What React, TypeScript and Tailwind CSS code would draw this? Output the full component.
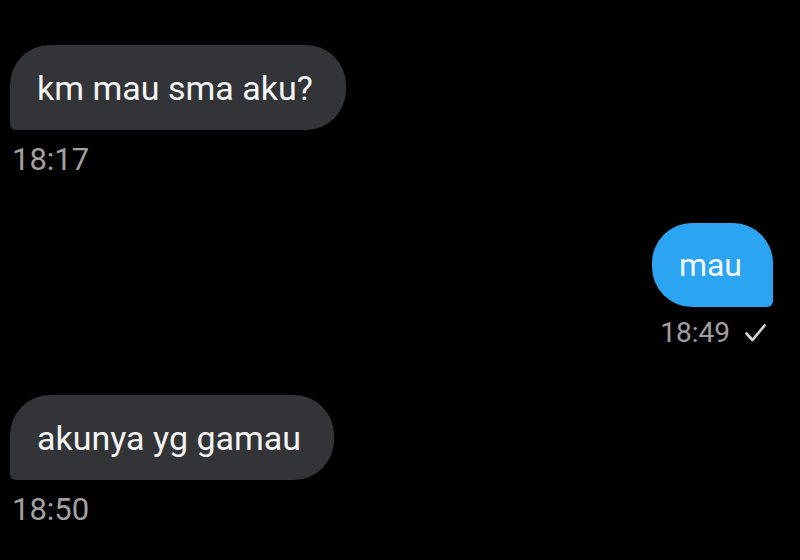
export default function App() {
  return (
    <div className="w-[800px] h-[560px] bg-black overflow-hidden font-['Roboto',sans-serif] flex flex-col pt-[45px]">
      <div className="ml-[10px] self-start h-[85px] flex items-center pl-[27px] pr-[33px] bg-[#323437] rounded-[40px] rounded-bl-[6px]">
        <span className="text-[34px] leading-none text-[#f4f4f4]">km mau sma aku?</span>
      </div>
      <div className="ml-[12px] mt-[14px] text-[31px] leading-none text-[#a0a0a0]">18:17</div>

      <div className="mt-[48px] mr-[27px] self-end h-[84px] flex items-center pl-[27px] pr-[31px] bg-[#2ba4f2] rounded-[40px] rounded-br-[6px]">
        <span className="text-[32px] leading-none text-[#f4f8fb]">mau</span>
      </div>
      <div className="mt-[12px] mr-[34px] self-end flex items-center gap-[15px] text-[28px] leading-none text-[#a0a0a0]">
        <span>18:49</span>
        <svg width="21" height="18" viewBox="0 0 21 18" fill="none">
          <path d="M1.5 9.5 L7.5 16 L19.5 1.5" stroke="#d4d4d4" strokeWidth="2.7" strokeLinecap="round" strokeLinejoin="round" />
        </svg>
      </div>

      <div className="mt-[48px] ml-[10px] self-start h-[85px] flex items-center pl-[27px] pr-[33px] bg-[#323437] rounded-[40px] rounded-bl-[6px]">
        <span className="text-[34px] leading-none text-[#f4f4f4]">akunya yg gamau</span>
      </div>
      <div className="ml-[12px] mt-[14px] text-[31px] leading-none text-[#a0a0a0]">18:50</div>
    </div>
  );
}
